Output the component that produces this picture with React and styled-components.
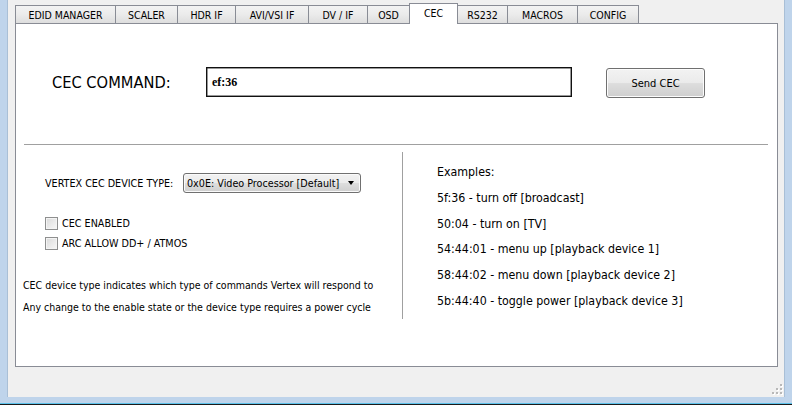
import React from "react";
import styled, { createGlobalStyle } from "styled-components";

const GlobalStyle = createGlobalStyle`
  html, body { margin: 0; padding: 0; background: #1a1a1a; }
  body { width: 792px; height: 405px; overflow: hidden; }
  * { box-sizing: border-box; }
`;

const UI = `"DejaVu Sans Condensed", "Liberation Sans", sans-serif`;

const Frame = styled.div`
  width: 792px;
  height: 404px;
  background: #bfd4eb;
  padding: 0 7px 6px 7px;
  border-bottom: 1px solid #5cc2ea;
  display: flex;
  font-family: ${UI};
  color: #000;
`;

const ClientArea = styled.div`
  position: relative;
  flex: 1;
  display: flex;
  flex-direction: column;
  background: #f0f0f0;
  border-left: 1px solid #a9bfd6;
  border-right: 1px solid #a9bfd6;
  padding: 3px 6px 30px 7px;
`;

const TabStrip = styled.div`
  display: flex;
  align-items: flex-end;
  height: 20px;
`;

const Tab = styled.div`
  position: relative;
  z-index: ${(p) => (p.$active ? 2 : 1)};
  width: ${(p) => p.$w}px;
  height: ${(p) => (p.$active ? 21 : 18)}px;
  margin-left: ${(p) => (p.$first ? 0 : -1)}px;
  margin-bottom: ${(p) => (p.$active ? -1 : 0)}px;
  border: 1px solid #898c95;
  border-bottom: none;
  background: ${(p) =>
    p.$active ? "#ffffff" : "linear-gradient(#f3f3f3 0%, #ebebeb 50%, #dedede 100%)"};
  font-size: 10.5px;
  line-height: 15px;
  padding-top: 2px;
  text-align: center;
  white-space: nowrap;
`;

const Panel = styled.div`
  flex: 1;
  background: #fff;
  border: 1px solid #898c95;
  display: flex;
  flex-direction: column;
`;

const CommandRow = styled.div`
  display: flex;
  align-items: flex-start;
  margin-top: 43px;
  padding-left: 36px;
`;

const BigLabel = styled.div`
  width: 154px;
  height: 30px;
  display: flex;
  align-items: center;
  font-size: 16.3px;
  padding-top: 1px;
`;

const CommandInput = styled.div`
  width: 366px;
  height: 30px;
  border: 1px solid #111;
  box-shadow: inset 0 0 0 0.5px #333;
  display: flex;
  align-items: center;
  padding-left: 5px;
  font-family: "Liberation Serif", serif;
  font-weight: bold;
  font-size: 12px;
`;

const Button = styled.div`
  width: 99px;
  height: 30px;
  margin-left: 34px;
  margin-top: 1px;
  border: 1px solid #707070;
  border-radius: 3px;
  background: linear-gradient(#f2f2f2 0%, #ebebeb 48%, #dddddd 52%, #cfcfcf 100%);
  box-shadow: inset 0 0 0 1px #fcfcfc;
  display: flex;
  align-items: center;
  justify-content: center;
  font-size: 11px;
`;

const Rule = styled.div`
  height: 1px;
  background: #a0a0a0;
  margin: 46px 9px 0 8px;
`;

const Lower = styled.div`
  display: grid;
  grid-template-columns: 386px 1px 1fr;
  margin-top: 7px;
`;

const LeftCol = styled.div`
  display: flex;
  flex-direction: column;
  padding-left: 7px;
  padding-bottom: 1px;
`;

const Divider = styled.div`
  background: #a0a0a0;
`;

const RightCol = styled.div`
  padding-left: 34px;
  padding-top: 8px;
  font-size: 12.3px;
  line-height: 25.8px;
`;

const SelectRow = styled.div`
  display: flex;
  align-items: center;
  margin: 21px 0 0 22px;
  height: 20px;
`;

const SmallLabel = styled.div`
  width: 138px;
  font-size: 10.7px;
  white-space: nowrap;
`;

const Select = styled.div`
  width: 178px;
  height: 20px;
  border: 1px solid #707070;
  border-radius: 3px;
  background: linear-gradient(#f2f2f2 0%, #ebebeb 48%, #dddddd 52%, #cfcfcf 100%);
  box-shadow: inset 0 0 0 1px #fafafa;
  display: flex;
  align-items: center;
  justify-content: space-between;
  padding: 0 6px 0 3px;
  font-size: 10.7px;
  white-space: nowrap;
`;

const Arrow = styled.span`
  width: 0;
  height: 0;
  border-left: 3.5px solid transparent;
  border-right: 3.5px solid transparent;
  border-top: 4px solid #000;
`;

const CheckRows = styled.div`
  display: flex;
  flex-direction: column;
  margin: 20px 0 0 22px;
`;

const CheckRow = styled.label`
  display: flex;
  align-items: center;
  height: 20px;
  font-size: 10.7px;
`;

const Box = styled.span`
  width: 13px;
  height: 13px;
  border: 1px solid #8e8f8f;
  background: linear-gradient(135deg, #d9d9d9 0%, #ececec 60%, #f7f7f7 100%);
  box-shadow: inset 0 0 0 1px #f4f4f4;
  margin-right: 4px;
  flex: none;
`;

const Notes = styled.div`
  margin-top: 21px;
  font-size: 10.5px;
  line-height: 22px;
  white-space: nowrap;
`;

const Grip = styled.svg`
  position: absolute;
  right: 1px;
  bottom: 2px;
`;

const tabs = [
  ["EDID MANAGER", 101],
  ["SCALER", 63],
  ["HDR IF", 59],
  ["AVI/VSI IF", 74],
  ["DV / IF", 60],
  ["OSD", 43],
  ["CEC", 49],
  ["RS232", 51],
  ["MACROS", 71],
  ["CONFIG", 62],
];

const examples = [
  "Examples:",
  "5f:36 - turn off [broadcast]",
  "50:04 - turn on [TV]",
  "54:44:01 - menu up [playback device 1]",
  "58:44:02 - menu down [playback device 2]",
  "5b:44:40 - toggle power [playback device 3]",
];

function GripIcon() {
  const pts = [
    [9, 1],
    [9, 5],
    [5, 5],
    [9, 9],
    [5, 9],
    [1, 9],
  ];
  return (
    <Grip width="12" height="12" viewBox="0 0 12 12">
      {pts.map(([x, y]) => (
        <g key={`${x}-${y}`}>
          <rect x={x + 1} y={y + 1} width="2" height="2" fill="#ffffff" />
          <rect x={x} y={y} width="2" height="2" fill="#b8b8b8" />
        </g>
      ))}
    </Grip>
  );
}

export default function App() {
  return (
    <>
      <GlobalStyle />
      <Frame>
        <ClientArea>
          <TabStrip>
            {tabs.map(([label, w], i) => (
              <Tab key={label} $w={w} $first={i === 0} $active={label === "CEC"}>
                {label}
              </Tab>
            ))}
          </TabStrip>
          <Panel>
            <CommandRow>
              <BigLabel>CEC COMMAND:</BigLabel>
              <CommandInput>ef:36</CommandInput>
              <Button>Send CEC</Button>
            </CommandRow>
            <Rule />
            <Lower>
              <LeftCol>
                <SelectRow>
                  <SmallLabel>VERTEX CEC DEVICE TYPE:</SmallLabel>
                  <Select>
                    <span>0x0E: Video Processor [Default]</span>
                    <Arrow />
                  </Select>
                </SelectRow>
                <CheckRows>
                  <CheckRow>
                    <Box />
                    CEC ENABLED
                  </CheckRow>
                  <CheckRow>
                    <Box />
                    ARC ALLOW DD+ / ATMOS
                  </CheckRow>
                </CheckRows>
                <Notes>
                  <div>CEC device type indicates which type of commands Vertex will respond to</div>
                  <div>Any change to the enable state or the device type requires a power cycle</div>
                </Notes>
              </LeftCol>
              <Divider />
              <RightCol>
                {examples.map((t) => (
                  <div key={t}>{t}</div>
                ))}
              </RightCol>
            </Lower>
          </Panel>
          <GripIcon />
        </ClientArea>
      </Frame>
    </>
  );
}
